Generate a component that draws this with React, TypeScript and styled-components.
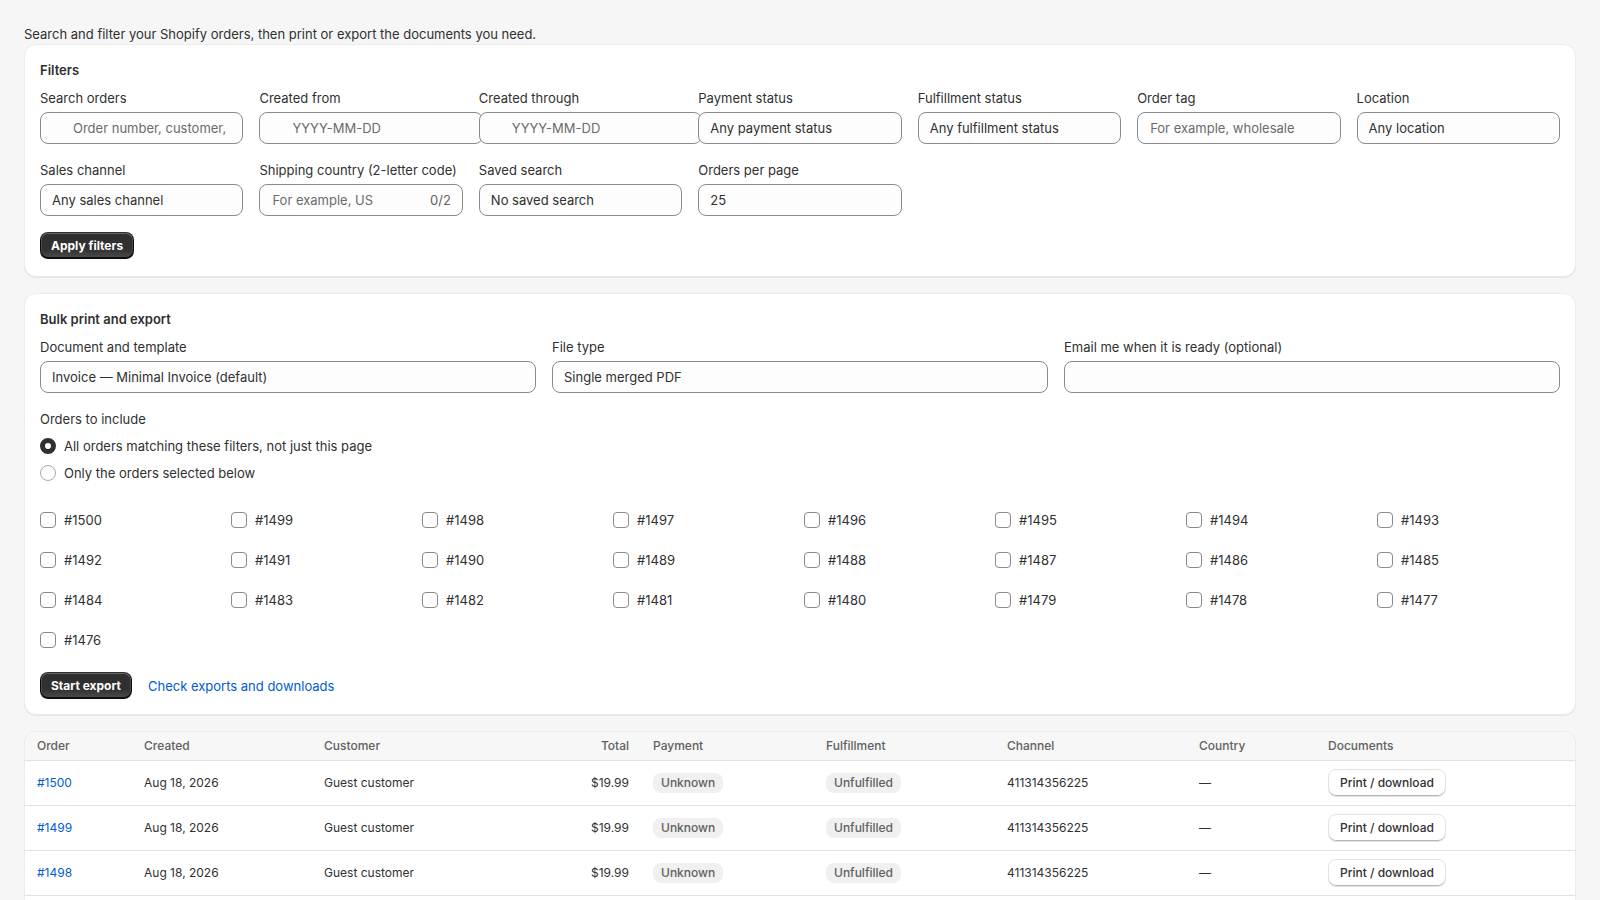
import React from "react";
import styled, { createGlobalStyle } from "styled-components";

const GlobalStyle = createGlobalStyle`
  * { box-sizing: border-box; }
  html, body { margin: 0; padding: 0; }
  body {
    background: #f6f6f6;
    font-family: Inter, "Noto Sans", "Liberation Sans", sans-serif;
    font-size: 13px;
    line-height: 20px;
    color: #303030;
  }
`;

const Page = styled.div`
  padding: 24px 24px 24px;
  display: flex;
  flex-direction: column;
`;

const Intro = styled.p`
  margin: 0;
  font-size: 13px;
  line-height: 20px;
  color: #303030;
`;

const Stack = styled.div`
  display: flex;
  flex-direction: column;
  gap: 16px;
`;

const Card = styled.section<{ $flush?: boolean; $bottom?: number }>`
  background: #ffffff;
  border-radius: 12px;
  border: 1px solid #ebebeb;
  box-shadow: 0 1px 0 0 rgba(26, 26, 26, 0.07);
  padding: ${(p) => (p.$flush ? "0" : `15px 15px ${p.$bottom ?? 15}px`)};
  overflow: hidden;
`;

const CardTitle = styled.h2`
  margin: 0 0 8px;
  font-size: 13px;
  line-height: 20px;
  font-weight: 600;
  color: #303030;
`;

const FilterGrid = styled.div`
  display: grid;
  grid-template-columns: repeat(7, minmax(0, 1fr));
  column-gap: 16px;
  row-gap: 16px;
`;

const ThreeGrid = styled.div`
  display: grid;
  grid-template-columns: repeat(3, minmax(0, 1fr));
  column-gap: 16px;
`;

const Field = styled.div`
  display: flex;
  flex-direction: column;
  gap: 4px;
  min-width: 0;
`;

const Label = styled.label`
  font-size: 13px;
  line-height: 20px;
  color: #303030;
  white-space: nowrap;
`;

const inputBase = `
  height: 32px;
  border: 1px solid #8a8a8a;
  border-radius: 8px;
  background: #fdfdfd;
  font-family: Inter, "Noto Sans", "Liberation Sans", sans-serif;
  font-size: 13px;
  color: #303030;
  outline: none;
`;

const TextInput = styled.input<{ $indent?: boolean; $wide?: boolean }>`
  ${inputBase}
  width: ${(p) => (p.$wide ? "calc(100% + 20px)" : "100%")};
  padding: 0 12px 0 ${(p) => (p.$indent ? "32px" : "12px")};
  &::placeholder { color: #6b6b6b; opacity: 1; }
`;

const SelectBox = styled.select`
  ${inputBase}
  width: 100%;
  padding: 0 12px 0 11px;
  appearance: none;
  -webkit-appearance: none;
`;

const AffixBox = styled.div`
  ${inputBase}
  width: 100%;
  display: flex;
  align-items: center;
  padding: 0 11px 0 12px;
  gap: 8px;
`;

const BareInput = styled.input`
  flex: 1;
  min-width: 0;
  border: none;
  background: transparent;
  outline: none;
  padding: 0;
  font-family: inherit;
  font-size: 13px;
  color: #303030;
  &::placeholder { color: #6b6b6b; opacity: 1; }
`;

const Counter = styled.span`
  color: #616161;
  font-size: 13px;
`;

const Actions = styled.div<{ $top: number }>`
  display: flex;
  align-items: center;
  gap: 16px;
  margin-top: ${(p) => p.$top}px;
`;

const PrimaryButton = styled.button`
  height: 27px;
  padding: 0 11px;
  border: none;
  border-radius: 8px;
  background: linear-gradient(180deg, rgba(48, 48, 48, 0) 63%, rgba(255, 255, 255, 0.15) 100%), #303030;
  box-shadow: inset 0 -1px 0 1px rgba(0, 0, 0, 0.8), inset 0 0 0 1px #303030, inset 0 0.5px 0 1.5px rgba(255, 255, 255, 0.25);
  color: #ffffff;
  font-family: inherit;
  font-size: 12px;
  font-weight: 650;
  line-height: 16px;
  cursor: pointer;
`;

const SecondaryButton = styled.button`
  height: 28px;
  padding: 0 11px;
  border: 1px solid #e3e3e3;
  border-radius: 8px;
  background: #ffffff;
  box-shadow: inset 0 -1px 0 0 #b5b5b5;
  color: #303030;
  font-family: inherit;
  font-size: 12px;
  font-weight: 500;
  white-space: nowrap;
  cursor: pointer;
`;

const Link = styled.a`
  color: #005bd3;
  text-decoration: none;
  font-size: 13px;
  cursor: pointer;
`;

const Section = styled.div<{ $top: number }>`
  margin-top: ${(p) => p.$top}px;
`;

const GroupLabel = styled.div`
  font-size: 13px;
  line-height: 20px;
  color: #303030;
`;

const RadioList = styled.div`
  display: flex;
  flex-direction: column;
  gap: 5px;
  margin-top: 6px;
`;

const OptionRow = styled.label`
  display: flex;
  align-items: center;
  gap: 8px;
  height: 22px;
  font-size: 13px;
  color: #303030;
  cursor: pointer;
`;

const RadioDot = styled.span<{ $checked?: boolean }>`
  width: 16px;
  height: 16px;
  border-radius: 50%;
  flex: none;
  background: #ffffff;
  border: ${(p) => (p.$checked ? "5px solid #303030" : "1px solid #a8a8a8")};
`;

const CheckGrid = styled.div`
  display: grid;
  grid-template-columns: repeat(8, minmax(0, 1fr));
  column-gap: 8px;
  row-gap: 16px;
  margin-top: 24px;
`;

const CheckItem = styled.label`
  display: flex;
  align-items: center;
  gap: 8px;
  height: 24px;
  font-size: 13px;
  color: #303030;
  cursor: pointer;
`;

const CheckBox = styled.span`
  width: 16px;
  height: 16px;
  flex: none;
  border: 1px solid #8a8a8a;
  border-radius: 4px;
  background: #ffffff;
`;

const Table = styled.table`
  width: 100%;
  border-collapse: collapse;
  table-layout: fixed;
  font-size: 12px;
`;

const HeadCell = styled.th<{ $w: number; $right?: boolean }>`
  width: ${(p) => p.$w}px;
  background: #f7f7f7;
  color: #616161;
  font-weight: 500;
  text-align: ${(p) => (p.$right ? "right" : "left")};
  padding: 4px 12px 3px;
  height: 28px;
  border-bottom: 1px solid #e3e3e3;
  white-space: nowrap;
`;

const Cell = styled.td<{ $right?: boolean }>`
  padding: 8px 12px;
  height: 45px;
  border-bottom: 1px solid #e3e3e3;
  text-align: ${(p) => (p.$right ? "right" : "left")};
  color: #303030;
  vertical-align: middle;
  white-space: nowrap;
`;

const OrderLink = styled.a`
  color: #005bd3;
  text-decoration: none;
`;

const Badge = styled.span`
  display: inline-flex;
  align-items: center;
  height: 20px;
  padding: 0 8px;
  border-radius: 8px;
  background: #f0f0f0;
  color: #616161;
  font-size: 12px;
  font-weight: 500;
`;

const orderNumbers = Array.from({ length: 25 }, (_, i) => 1500 - i);

const columns: { label: string; w: number; right?: boolean }[] = [
  { label: "Order", w: 107 },
  { label: "Created", w: 180 },
  { label: "Customer", w: 247 },
  { label: "Total", w: 82, right: true },
  { label: "Payment", w: 173 },
  { label: "Fulfillment", w: 181 },
  { label: "Channel", w: 192 },
  { label: "Country", w: 129 },
  { label: "Documents", w: 261 },
];

export default function App() {
  return (
    <>
      <GlobalStyle />
      <Page>
        <Intro>Search and filter your Shopify orders, then print or export the documents you need.</Intro>
        <Stack>
          <Card $bottom={17}>
            <CardTitle>Filters</CardTitle>
            <FilterGrid>
              <Field>
                <Label>Search orders</Label>
                <TextInput $indent placeholder="Order number, customer, email" />
              </Field>
              <Field>
                <Label>Created from</Label>
                <TextInput $indent $wide placeholder="YYYY-MM-DD" />
              </Field>
              <Field>
                <Label>Created through</Label>
                <TextInput $indent $wide placeholder="YYYY-MM-DD" />
              </Field>
              <Field>
                <Label>Payment status</Label>
                <SelectBox defaultValue="any">
                  <option value="any">Any payment status</option>
                </SelectBox>
              </Field>
              <Field>
                <Label>Fulfillment status</Label>
                <SelectBox defaultValue="any">
                  <option value="any">Any fulfillment status</option>
                </SelectBox>
              </Field>
              <Field>
                <Label>Order tag</Label>
                <TextInput placeholder="For example, wholesale" />
              </Field>
              <Field>
                <Label>Location</Label>
                <SelectBox defaultValue="any">
                  <option value="any">Any location</option>
                </SelectBox>
              </Field>
              <Field>
                <Label>Sales channel</Label>
                <SelectBox defaultValue="any">
                  <option value="any">Any sales channel</option>
                </SelectBox>
              </Field>
              <Field>
                <Label>Shipping country (2-letter code)</Label>
                <AffixBox>
                  <BareInput placeholder="For example, US" maxLength={2} />
                  <Counter>0/2</Counter>
                </AffixBox>
              </Field>
              <Field>
                <Label>Saved search</Label>
                <SelectBox defaultValue="none">
                  <option value="none">No saved search</option>
                </SelectBox>
              </Field>
              <Field>
                <Label>Orders per page</Label>
                <SelectBox defaultValue="25">
                  <option value="25">25</option>
                </SelectBox>
              </Field>
            </FilterGrid>
            <Actions $top={16}>
              <PrimaryButton>Apply filters</PrimaryButton>
            </Actions>
          </Card>

          <Card>
            <CardTitle>Bulk print and export</CardTitle>
            <ThreeGrid>
              <Field>
                <Label>Document and template</Label>
                <SelectBox defaultValue="inv">
                  <option value="inv">Invoice — Minimal Invoice (default)</option>
                </SelectBox>
              </Field>
              <Field>
                <Label>File type</Label>
                <SelectBox defaultValue="pdf">
                  <option value="pdf">Single merged PDF</option>
                </SelectBox>
              </Field>
              <Field>
                <Label>Email me when it is ready (optional)</Label>
                <TextInput />
              </Field>
            </ThreeGrid>
            <Section $top={16}>
              <GroupLabel>Orders to include</GroupLabel>
              <RadioList>
                <OptionRow>
                  <RadioDot $checked />
                  All orders matching these filters, not just this page
                </OptionRow>
                <OptionRow>
                  <RadioDot />
                  Only the orders selected below
                </OptionRow>
              </RadioList>
            </Section>
            <CheckGrid>
              {orderNumbers.map((n) => (
                <CheckItem key={n}>
                  <CheckBox />#{n}
                </CheckItem>
              ))}
            </CheckGrid>
            <Actions $top={20}>
              <PrimaryButton>Start export</PrimaryButton>
              <Link>Check exports and downloads</Link>
            </Actions>
          </Card>

          <Card $flush>
            <Table>
              <thead>
                <tr>
                  {columns.map((c) => (
                    <HeadCell key={c.label} $w={c.w} $right={c.right}>
                      {c.label}
                    </HeadCell>
                  ))}
                </tr>
              </thead>
              <tbody>
                {orderNumbers.map((n) => (
                  <tr key={n}>
                    <Cell>
                      <OrderLink>#{n}</OrderLink>
                    </Cell>
                    <Cell>Aug 18, 2026</Cell>
                    <Cell>Guest customer</Cell>
                    <Cell $right>$19.99</Cell>
                    <Cell>
                      <Badge>Unknown</Badge>
                    </Cell>
                    <Cell>
                      <Badge>Unfulfilled</Badge>
                    </Cell>
                    <Cell>411314356225</Cell>
                    <Cell>—</Cell>
                    <Cell>
                      <SecondaryButton>Print / download</SecondaryButton>
                    </Cell>
                  </tr>
                ))}
              </tbody>
            </Table>
          </Card>
        </Stack>
      </Page>
    </>
  );
}
